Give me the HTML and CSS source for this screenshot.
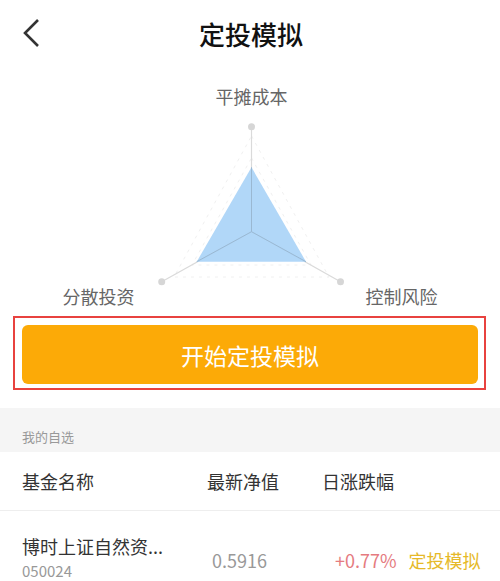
FILE: index.html
```html
<!DOCTYPE html>
<html lang="zh-CN">
<head>
    <meta charset="UTF-8">
    <meta name="viewport" content="width=device-width, initial-scale=1.0">
    <title>定投模拟</title>
    <link rel="stylesheet" href="styles.css">
</head>
<body>
    <div class="header">
        <svg class="back" width="24" height="30" viewBox="0 0 24 30">
            <polyline points="18,2 5,15 18,28" fill="none" stroke="#333" stroke-width="2.6"/>
        </svg>
        <div class="title">定投模拟</div>
    </div>

    <svg class="radar" width="500" height="244" viewBox="0 0 500 244">
        <g stroke="#f0f0f0" stroke-width="1" fill="none" stroke-dasharray="3 5">
            <polygon points="251.5,92 311,199 192,199"/>
            <polygon points="251.5,70 329,211 174,211"/>
        </g>
        <g stroke="#dadada" stroke-width="1.2">
            <line x1="251.5" y1="165.7" x2="251.5" y2="60.7"/>
            <line x1="251.5" y1="165.7" x2="161.7" y2="215.7"/>
            <line x1="251.5" y1="165.7" x2="340.5" y2="215.7"/>
        </g>
        <polygon points="251.5,101.3 196.7,195.7 306,195.7" fill="#a9d3f7" fill-opacity="0.9"/>
        <g stroke="#9ab8d2" stroke-width="1">
            <line x1="251.5" y1="165.7" x2="251.5" y2="101.3"/>
            <line x1="251.5" y1="165.7" x2="196.7" y2="195.7"/>
            <line x1="251.5" y1="165.7" x2="306" y2="195.7"/>
        </g>
        <g fill="#d6d6d6">
            <circle cx="251.5" cy="60.7" r="3.5"/>
            <circle cx="161.7" cy="215.7" r="3.5"/>
            <circle cx="340.5" cy="215.7" r="3.5"/>
        </g>
        <g class="axis-label">
            <text x="251.5" y="38" text-anchor="middle">平摊成本</text>
            <text x="98.5" y="238" text-anchor="middle">分散投资</text>
            <text x="401.5" y="238" text-anchor="middle">控制风险</text>
        </g>
    </svg>

    <div class="start-box">
        <button class="start">开始定投模拟</button>
    </div>

    <div class="section">我的自选</div>

    <div class="table-head">
        <div>基金名称</div>
        <div>最新净值</div>
        <div>日涨跌幅</div>
    </div>

    <div class="fund-row">
        <div class="fund-name">
            <div class="name">博时上证自然资...</div>
            <div class="code">050024</div>
        </div>
        <div class="value">0.5916</div>
        <div class="change">
            <span class="up">+0.77%</span>
            <span class="link">定投模拟</span>
        </div>
    </div>
</body>
</html>
```

FILE: styles.css
```css
body{
    margin: 0;
    background-color: white;
    font-family: "Noto Sans CJK SC", "Noto Sans", sans-serif;
    color: #333;
    overflow: hidden;
}
.header{
    height: 66px;
    display: flex;
    align-items: center;
    justify-content: center;
    position: relative;
}
.back{
    position: absolute;
    left: 20px;
    top: 18px;
}
.title{
    font-size: 26px;
    font-weight: 500;
    color: #111;
    margin-left: 2px;
    margin-top: 1px;
}
.radar{
    display: block;
}
.axis-label{
    font-size: 18px;
    fill: #666;
}
.start-box{
    margin: 6px 14px 0 13px;
    border: 2px solid #e8423f;
    padding: 7px 6px 4px 7px;
}
.start{
    display: block;
    width: 100%;
    height: 59px;
    border: none;
    border-radius: 6px;
    background-color: #fcaa07;
    color: white;
    font-family: "Noto Sans CJK SC", sans-serif;
    font-size: 23px;
}
.section{
    margin-top: 18px;
    height: 44px;
    background-color: #f5f5f5;
    box-sizing: border-box;
    padding: 20px 0 0 22px;
    font-size: 13px;
    line-height: 18px;
    color: #999;
}
.table-head{
    height: 58px;
    display: grid;
    grid-template-columns: 185px 115px 1fr;
    align-items: center;
    padding-left: 22px;
    border-bottom: 1px solid #eee;
    font-size: 18px;
    color: #333;
}
.fund-row{
    display: grid;
    grid-template-columns: 185px 115px 1fr;
    align-items: center;
    padding: 22px 0 0 22px;
}
.name{
    font-size: 18px;
    line-height: 26px;
    color: #333;
}
.code{
    font-size: 15px;
    line-height: 24px;
    color: #999;
}
.value{
    padding-left: 5px;
    font-size: 18px;
    color: #999;
    margin-top: 4px;
}
.change{
    padding-left: 13px;
    font-size: 18px;
    margin-top: 4px;
}
.up{
    color: #e57b80;
}
.link{
    color: #e6b928;
    margin-left: 8px;
}
```
